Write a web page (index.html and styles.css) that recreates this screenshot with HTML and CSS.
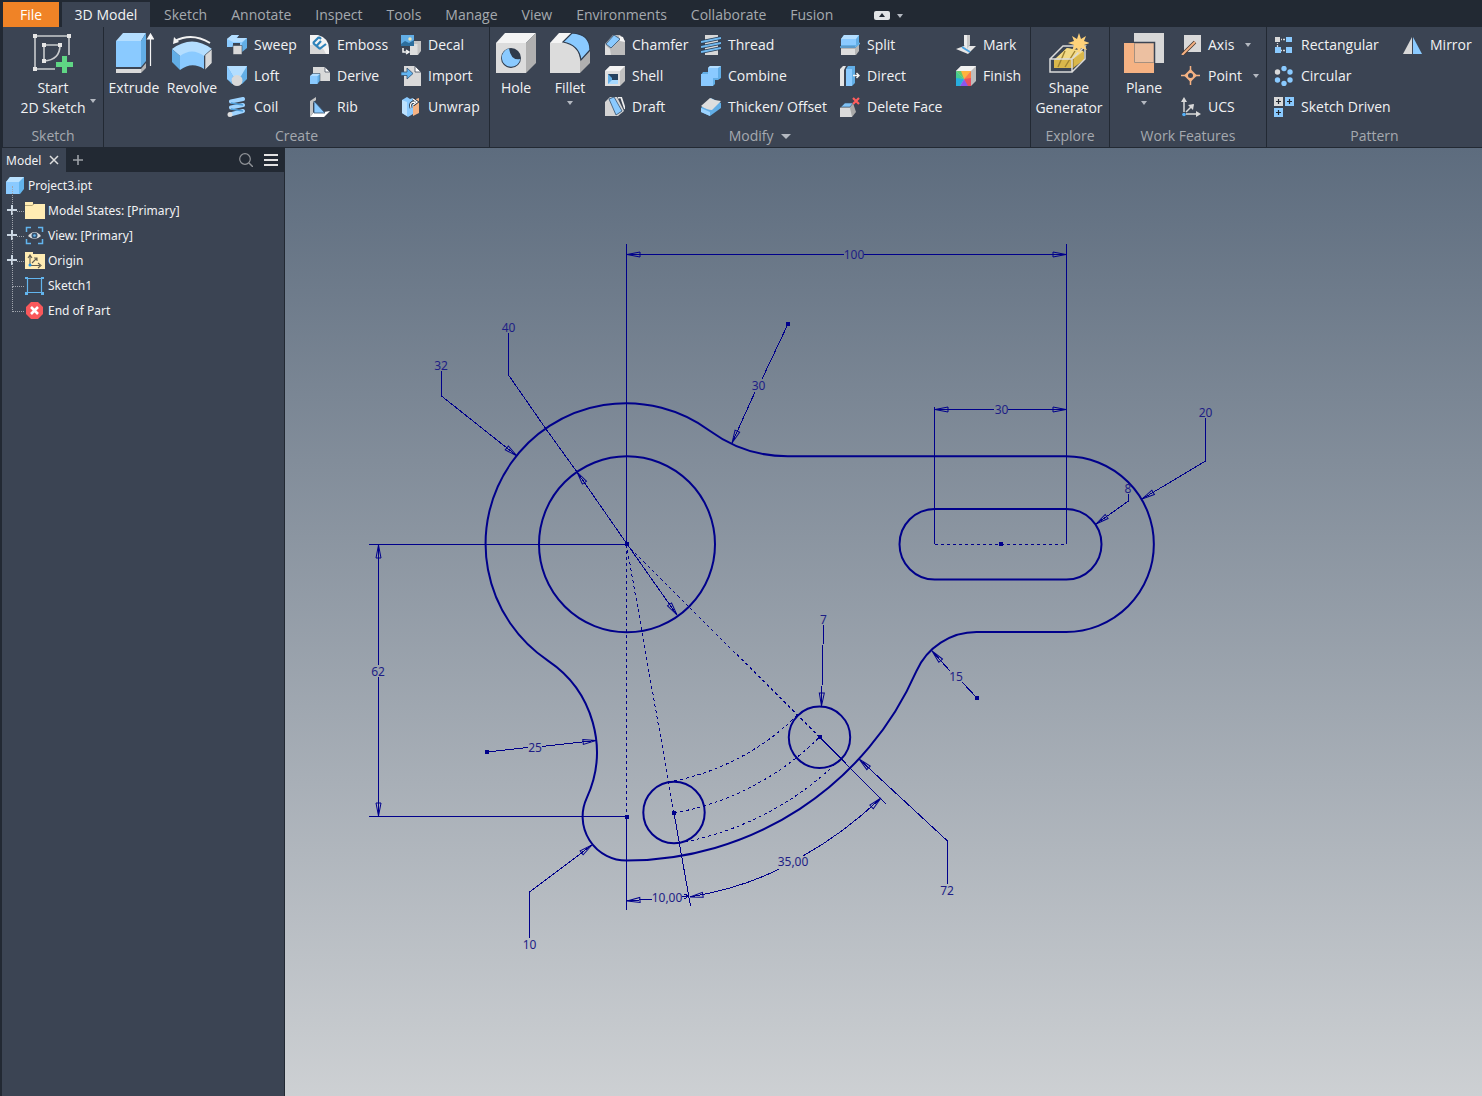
FILE: index.html
```html
<!DOCTYPE html>
<html lang="en">
<head>
<meta charset="utf-8">
<title>Project3.ipt</title>
<link rel="stylesheet" href="styles.css">
</head>
<body>
<svg class="sprite" aria-hidden="true">
  <symbol id="start-sketch" viewBox="0 0 40 40"><path d="M2 3H36V22M2 3V36H22M11 12H27M11 12V28M27 12Q27 27 11 28" fill="none" stroke="#c9cbce" stroke-width="1.6"/><path d="M0 1h4v4h-4zM34 1h4v4h-4zM0 34h4v4h-4zM9 10h4v4h-4zM25 10h4v4h-4zM9 26h4v4h-4z" fill="#e6e6e6"/><path d="M29 23h5v6h6v5h-6v6h-5v-6h-6v-5h6z" fill="#5fd684"/></symbol>
  <symbol id="extrude" viewBox="0 0 40 40"><path d="M2 8H27V34H2z" fill="#8acaff"/><path d="M2 8L9 0H32L27 8z" fill="#b4deff"/><path d="M27 8L32 0V28L27 34z" fill="#62aee6"/><path d="M2 36H27V40H2z" fill="#dadada"/><path d="M27 36L32 30V35L27 40z" fill="#b4b4b4"/><path d="M36.500 33V4M33.500 6L36.500 1L39.500 6z" fill="#fff" stroke="#f4f4f4" stroke-width="1.2"/></symbol>
  <symbol id="revolve" viewBox="0 0 40 40"><path d="M8 22Q20 13 32 22V36Q20 28 8 37z" fill="#8acaff"/><path d="M0 16Q20 1 40 16L32 23Q20 14 8 23z" fill="#b4deff"/><path d="M0 16L8 23V37L0 29z" fill="#62aee6"/><path d="M40 16L33 22V37L40 30z" fill="#d8d8d8" stroke="#3b4453" stroke-width=".6"/><path d="M3 8Q20-1 38 10" fill="none" stroke="#f2f2f2" stroke-width="2"/><path d="M1 11L2 4L7 9z" fill="#f2f2f2"/></symbol>
  <symbol id="hole" viewBox="0 0 40 40"><path d="M0 10H30V40H0z" fill="#dcdcdc"/><path d="M0 10L9 0H40L30 10z" fill="#f4f4f4"/><path d="M30 10L40 0V30L30 40z" fill="#b0b0b0"/><circle cx="15" cy="25" r="10" fill="#2e3a4b"/><path d="M13 15.500A9.300 9.300 0 1 0 24.300 26Q15 28 13 15.500z" fill="#8acaff"/></symbol>
  <symbol id="fillet" viewBox="0 0 40 40"><path d="M0 10L9 0H22V14z" fill="#f4f4f4"/><path d="M0 10H13Q29 11 30 26V40H0z" fill="#dcdcdc"/><path d="M30 27L40 17V30L30 40z" fill="#b0b0b0"/><path d="M13 9L22 0Q40 1 40 17L31 27Q29 12 13 9z" fill="#8acaff" stroke="#2e3a4b" stroke-width="1.2"/></symbol>
  <symbol id="shape-gen" viewBox="0 0 40 40"><path d="M5 27L18 15L35 19V27L24 35H5z" fill="#d9b74b"/><path d="M5 27L18 15L35 18L24 26z" fill="#f2d984"/><path d="M9 34L16 18M16 34L26 18M24 35V26" stroke="#9e8231" stroke-width="1.4"/><path d="M1 26H23V39H1zM1 26L14 13H36L23 26M36 13V26L23 39" fill="none" stroke="#dadada" stroke-width="1.5"/><path d="M30 0L32 6L37 3L35 8L41 10L35 12L38 17L32 15L30 21L28 15L23 18L25 12L19 10L25 8L23 3L28 6z" fill="#ffd27a"/></symbol>
  <symbol id="plane" viewBox="0 0 40 40"><path d="M10 0H40V30H10z" fill="#d8d8d8"/><path d="M0 10H30V40H0z" fill="#f5b283"/><path d="M10 10H30V30H10z" fill="#ecc0a1"/><path d="M10 9.500H30.500V30" fill="none" stroke="#3b4453" stroke-width="1.5"/><path d="M10.500 10V29.500H30" fill="none" stroke="#a6907f"/></symbol>

  <symbol id="sweep" viewBox="0 0 20 20"><path d="M0 4L5 0H12L10 3H20V13H13V8H6V12H0z" fill="#8acaff"/><path d="M0 4L5 0H12L9 3H20L15 7H6z" fill="#b4deff"/><path d="M15 8L20 3V13L15 17z" fill="#62aee6"/><path d="M6 10.500H15V19.500H6z" fill="#d9d9d9" stroke="#3b4453" stroke-width=".6"/></symbol>
  <symbol id="loft" viewBox="0 0 20 20"><path d="M0 0H20V13L15 18H5L0 13z" fill="#62aee6"/><path d="M0 0H20L14 10H6z" fill="#b4deff"/><path d="M0 0L6 10L4 16L0 13z" fill="#8acaff"/><circle cx="10" cy="14.500" r="5.500" fill="#d9d9d9"/></symbol>
  <symbol id="coil" viewBox="0 0 20 20"><path d="M4 4.500L16 2M4 10.500L16 8M5 17L16 14" stroke="#9dd3ff" stroke-width="4" stroke-linecap="round"/><path d="M4 6L16 8M4 12L16 14" stroke="#4d9cd8" stroke-width="1.500"/><circle cx="3" cy="17.500" r="2.500" fill="#dedede"/></symbol>
  <symbol id="emboss" viewBox="0 0 20 20"><path d="M0 0H8Q19 3 19 14V19H0z" fill="#f4f4f4"/><path d="M0 10Q12 8 16 19H0z" fill="#d8d8d8"/><path d="M3 8L9 2M3 8L10 14M6.500 11L11 6M9.500 14L16 9M9 2L11 4" fill="none" stroke="#2e83ba" stroke-width="2.200"/></symbol>
  <symbol id="derive" viewBox="0 0 20 20"><path d="M3 1H15L20 6V15H3z" fill="#d9d9d9"/><path d="M15 1V6H20z" fill="#fff" stroke="#3b4453" stroke-width=".7"/><path d="M0 10L2.500 7.500H10V15L7.500 18H0z" fill="#62aee6" stroke="#3b4453" stroke-width=".5"/><path d="M0 10H7.500V18H0z" fill="#8acaff"/><path d="M0 10L2.500 8H10L7.500 10z" fill="#b4deff"/></symbol>
  <symbol id="rib" viewBox="0 0 20 20"><path d="M0 4L6 0V3L3 6V16L0 20z" fill="#c4c4c4"/><path d="M0 20L4 15H14L20 14L14 20z" fill="#fff"/><path d="M4 4V16H15z" fill="#8acaff" stroke="#35506d" stroke-width=".8"/></symbol>
  <symbol id="decal" viewBox="0 0 20 20"><path d="M9 9L12 6H20V16L17 20H9z" fill="#c4c4c4"/><path d="M9 9H16.500V20H9z" fill="#dedede"/><path d="M0 0H13V11H0z" fill="#62aee6"/><path d="M0 9L4 6L8 8L13 5V11H0z" fill="#2d6e9d"/><circle cx="9" cy="4" r="1.700" fill="#eee7bb"/><path d="M2 13V17H7M5 15L8 17L5 19" fill="none" stroke="#f4f4f4" stroke-width="1.500"/></symbol>
  <symbol id="import" viewBox="0 0 20 20"><path d="M3 0H14L20 6V20H3z" fill="#d9d9d9"/><path d="M14 0V6H20z" fill="#fff" stroke="#3b4453" stroke-width=".8"/><path d="M0 6H6V2L12 7.500L6 13V9.500H0z" fill="#62b4f1" stroke="#35506d" stroke-width=".8"/></symbol>
  <symbol id="unwrap" viewBox="0 0 20 20"><path d="M1 3L6 0L9 2L12 1V17L7 20L1 16z" fill="#8acaff"/><path d="M1 3L6 5V19L1 16z" fill="#bde2ff"/><path d="M12 3L18 1V16L12 19z" fill="#f5b283"/><path d="M10 11Q8 5 14 5M12 2L16 5L12 8" fill="none" stroke="#27313f" stroke-width="3"/><path d="M10 11Q8 5 14 5M12 2L16 5L12 8" fill="none" stroke="#fff" stroke-width="1.300"/></symbol>
  <symbol id="chamfer" viewBox="0 0 20 20"><path d="M8 0H15L20 6V20H0V9z" fill="#bcbcbc"/><path d="M14 1L18 2L20 7L15 6z" fill="#f6f6f6"/><path d="M0 10L5 14L6 20H0z" fill="#dedede"/><path d="M1 9L9 0L15 4L6 13z" fill="#8acaff" stroke="#35506d" stroke-width=".8"/></symbol>
  <symbol id="shell" viewBox="0 0 20 20"><path d="M0 5L5 0H20V15L15 20H0z" fill="#c0c0c0"/><path d="M0 5L5 0H20L15 5z" fill="#f4f4f4"/><path d="M0 5H15V20H0z" fill="#dfdfdf"/><path d="M3 8H13V18H3z" fill="#264260"/><path d="M3 8L7 12V14H13V18H3z" fill="#62aee6"/><path d="M7 14H13V18H3z" fill="#a8d9ff"/></symbol>
  <symbol id="draft" viewBox="0 0 20 20"><path d="M0 5L5 0H12L19 14L13 19H0z" fill="#d4d4d4"/><path d="M4 2L9 0L17 14L11 18z" fill="#8acaff" stroke="#35506d" stroke-width=".8"/><path d="M13 1L16 0L20 12" fill="none" stroke="#eee" stroke-width="1.800"/></symbol>
  <symbol id="thread" viewBox="0 0 20 20"><path d="M4 0H17V20H4z" fill="#d8d8d8"/><path d="M0 7L20 3M0 12L20 8M0 17L20 13" stroke="#273c54" stroke-width="3.500"/><path d="M0 7L20 3M0 12L20 8M0 17L20 13" stroke="#71b9ef" stroke-width="2"/></symbol>
  <symbol id="combine" viewBox="0 0 20 20"><path d="M0 9L2 6H7V2L9 0H20V12L17 14H14V18L12 20H0z" fill="#62aee6"/><path d="M0 8H7V2H17V12H12V20H0z" fill="#8acaff"/><path d="M7 2L9 0H20L17 2z" fill="#b4deff"/></symbol>
  <symbol id="thicken" viewBox="0 0 20 20"><path d="M0 11L10 1L20 6V11L9 19L0 15z" fill="#62aee6"/><path d="M0 11L9 15V19L0 15z" fill="#9cd3ff"/><path d="M0 9L9 1Q14 4 20 4L11 13Q6 13 0 9z" fill="#dedede"/></symbol>
  <symbol id="split" viewBox="0 0 20 20"><path d="M1 13H15L19 9V16L16 20H1z" fill="#b7b7b7"/><path d="M1 14H15V20H1z" fill="#dedede"/><path d="M1 4L4 0H19V8L16 11H1z" fill="#62aee6"/><path d="M1 4H16V10H1z" fill="#8acaff"/><path d="M1 4L4 0H19L16 4z" fill="#b4deff"/><path d="M0 12H15L20 8" fill="none" stroke="#69b7ef" stroke-width="1.500"/></symbol>
  <symbol id="direct" viewBox="0 0 20 20"><path d="M0 3L3 0H6L4 4V20H0z" fill="#e4e4e4"/><path d="M6 3L8 0H15V17L12 20H6z" fill="#62aee6"/><path d="M6 3H12V20H6z" fill="#8acaff"/><path d="M13 9.500H19M16.500 7L19 9.500L16.500 12" fill="none" stroke="#f4f4f4" stroke-width="1.500"/></symbol>
  <symbol id="delete-face" viewBox="0 0 20 20"><path d="M0 11L5 6H13L16 15L12 20H0z" fill="#a9a9a9"/><path d="M0 11H10L12 20H0z" fill="#dadada"/><path d="M1 10L5 6H13L10 10z" fill="#7fc1f4" stroke="#35506d" stroke-width=".6"/><path d="M13 1L19 7M19 1L13 7" stroke="#ff5d5d" stroke-width="2.200"/></symbol>
  <symbol id="mark" viewBox="0 0 20 20"><path d="M0 14L8 11H20L12 19z" fill="#e6e6e6"/><path d="M6 12L14 17" stroke="#4ba2e1" stroke-width="2"/><path d="M8 0H14V10L11 14L8 10z" fill="#c7c7c7"/><path d="M8 0H11V14L8 10z" fill="#ececec"/></symbol>
  <symbol id="finish" viewBox="0 0 20 20"><path d="M0 5L5 0H20V15L15 20H0z" fill="#bdbdbd"/><path d="M0 5L5 0H20L15 5z" fill="#f1f1f1"/><path d="M0 5H8V13z" fill="#63c86b"/><path d="M5 5H15L8 13z" fill="#ffb33c"/><path d="M15 5V15L8 13z" fill="#ff7d45"/><path d="M15 12V20H11L8 13z" fill="#e95160"/><path d="M4 20H12L8 13z" fill="#8e55ee"/><path d="M0 11L8 13L4 20H0z" fill="#27adde"/><path d="M0 5L8 13L0 12z" fill="#45cb8d"/></symbol>
  <symbol id="axis" viewBox="0 0 20 20"><path d="M3 0H20V17H3z" fill="#d9d9d9"/><path d="M2 19L14 7" stroke="#47382f" stroke-width="3.500"/><path d="M1 20L14 7" stroke="#f5b283" stroke-width="2"/></symbol>
  <symbol id="point" viewBox="0 0 20 20"><path d="M9.500 0V19M0 9.500H19" stroke="#f5b283" stroke-width="1.500"/><path d="M9.500 3L16 9.500L9.500 16L3 9.500z" fill="#f5b283"/><circle cx="9.500" cy="9.500" r="2.500" fill="#3b4453"/></symbol>
  <symbol id="ucs" viewBox="0 0 20 20"><path d="M3 15V3M5 17H17M5 15L12 8" stroke="#d9d9d9" stroke-width="1.500"/><path d="M0 5L3 0L6 5zM15 14L20 17L15 20zM7 8L13 7L12 13z" fill="#d9d9d9"/><circle cx="3" cy="17.500" r="1.800" fill="#54b1fa"/></symbol>
  <symbol id="rectangular" viewBox="0 0 20 20"><path d="M7 4.500H12M3.500 8V12M7 15.500H12" stroke="#d9d9d9" stroke-width="1.300" stroke-dasharray="1 1 2 1"/><path d="M1 2h5v5h-5z" fill="#d9d9d9"/><path d="M12 2h6v5h-6zM1 12h6v6h-6zM12 12h6v6h-6z" fill="#8acaff"/></symbol>
  <symbol id="circular" viewBox="0 0 20 20"><g fill="#8acaff"><circle cx="10" cy="2.500" r="2.700"/><circle cx="16" cy="6" r="2.700"/><circle cx="16" cy="14" r="2.700"/><circle cx="10" cy="17.500" r="2.700"/><circle cx="3.500" cy="14" r="2.700"/></g><circle cx="3.500" cy="6" r="2.700" fill="#d9d9d9"/></symbol>
  <symbol id="sketch-driven" viewBox="0 0 20 20"><path d="M0 0h9v9h-9z" fill="#d9d9d9"/><path d="M11 0h9v9h-9zM0 11h9v9h-9z" fill="#8acaff"/><path d="M4.500 2V7M2 4.500H7M15.500 2V7M13 4.500H18M4.500 13V18M2 15.500H7" stroke="#222933" stroke-width="1.200"/></symbol>
  <symbol id="mirror" viewBox="0 0 20 20"><path d="M9 2V19H0z" fill="#d9d9d9"/><path d="M10 2V19H19z" fill="#8acaff"/></symbol>

  <symbol id="part" viewBox="0 0 20 20"><path d="M1 6L5 1H19V13L15 18H1z" fill="#62b5ee"/><path d="M1 6H14V18H1z" fill="#8acaff"/><path d="M1 6L5 1H19L14 6z" fill="#b9e1ff"/></symbol>
  <symbol id="folder" viewBox="0 0 20 20"><path d="M0 1H8V3H20V18H0z" fill="#ffecb3"/><path d="M0 4.500H7L9 3" fill="none" stroke="#b9a878"/></symbol>
  <symbol id="view" viewBox="0 0 20 20"><path d="M1.500 6V1.500H6M13 1.500H17.500V6M17.500 13V17.500H13M6 17.500H1.500V13" fill="none" stroke="#62b5ee" stroke-width="1.500"/><path d="M3 10Q9.500 2 16 10Q9.500 16 3 10z" fill="#dedede"/><circle cx="9.500" cy="9.500" r="3" fill="#35506d"/><circle cx="9.500" cy="9.500" r="1.300" fill="#62b5ee"/></symbol>
  <symbol id="origin" viewBox="0 0 20 20"><path d="M0 1H8V3H20V18H0z" fill="#ffecb3"/><path d="M5 14V5M3 7L5 4L7 7M6 14.500H15M13 12L16 14.500L13 17M7 12L12 7M9 7H12V10" fill="none" stroke="#625e50" stroke-width="1.100"/><circle cx="5" cy="14" r="1.500" fill="#1c90e8"/></symbol>
  <symbol id="sketch" viewBox="0 0 20 20"><path d="M2.500 2.500H16.500V16.500H2.500z" fill="none" stroke="#62b5ee" stroke-width="1.200"/><path d="M0 1h3v2h-3zM16 1h3v2h-3zM0 16h3v3h-3zM16 16h3v3h-3z" fill="#62b5ee"/></symbol>
  <symbol id="end" viewBox="0 0 20 20"><path d="M6 1H13L18 6V13L13 18H6L1 13V6z" fill="#f9585b"/><path d="M6 6L13 13M13 6L6 13" stroke="#fff" stroke-width="2.600"/></symbol>
</svg>

<nav class="tabs">
  <button class="tab tab-file">File</button>
  <button class="tab tab-active">3D Model</button>
  <button class="tab">Sketch</button>
  <button class="tab">Annotate</button>
  <button class="tab">Inspect</button>
  <button class="tab">Tools</button>
  <button class="tab">Manage</button>
  <button class="tab">View</button>
  <button class="tab">Environments</button>
  <button class="tab">Collaborate</button>
  <button class="tab">Fusion</button>
  <button class="ribbon-toggle" aria-label="Minimize ribbon"><svg width="30" height="10" viewBox="0 0 30 10"><rect width="16" height="9" rx="2" fill="#e2e4e7"/><path d="M5 6L8 2L11 6z" fill="#222933"/><path d="M23 3H29L26 7z" fill="#b4b9c1"/></svg></button>
</nav>

<div class="ribbon">
  <section class="panel panel-sketch">
    <div class="tools">
      <button class="big"><svg><use href="#start-sketch"/></svg><span>Start<br>2D Sketch</span><i class="caret caret-corner"></i></button>
    </div>
    <h2>Sketch</h2>
  </section>
  <section class="panel panel-create">
    <div class="tools">
      <button class="big"><svg><use href="#extrude"/></svg><span>Extrude</span></button>
      <button class="big"><svg><use href="#revolve"/></svg><span>Revolve</span></button>
      <div class="stack">
        <button class="small"><svg><use href="#sweep"/></svg>Sweep</button>
        <button class="small"><svg><use href="#loft"/></svg>Loft</button>
        <button class="small"><svg><use href="#coil"/></svg>Coil</button>
      </div>
      <div class="stack">
        <button class="small"><svg><use href="#emboss"/></svg>Emboss</button>
        <button class="small"><svg><use href="#derive"/></svg>Derive</button>
        <button class="small"><svg><use href="#rib"/></svg>Rib</button>
      </div>
      <div class="stack">
        <button class="small"><svg><use href="#decal"/></svg>Decal</button>
        <button class="small"><svg><use href="#import"/></svg>Import</button>
        <button class="small"><svg><use href="#unwrap"/></svg>Unwrap</button>
      </div>
    </div>
    <h2>Create</h2>
  </section>
  <section class="panel panel-modify">
    <div class="tools">
      <button class="big"><svg><use href="#hole"/></svg><span>Hole</span></button>
      <button class="big"><svg><use href="#fillet"/></svg><span>Fillet</span><i class="caret"></i></button>
      <div class="stack">
        <button class="small"><svg><use href="#chamfer"/></svg>Chamfer</button>
        <button class="small"><svg><use href="#shell"/></svg>Shell</button>
        <button class="small"><svg><use href="#draft"/></svg>Draft</button>
      </div>
      <div class="stack">
        <button class="small"><svg><use href="#thread"/></svg>Thread</button>
        <button class="small"><svg><use href="#combine"/></svg>Combine</button>
        <button class="small"><svg><use href="#thicken"/></svg>Thicken/ Offset</button>
      </div>
      <div class="stack">
        <button class="small"><svg><use href="#split"/></svg>Split</button>
        <button class="small"><svg><use href="#direct"/></svg>Direct</button>
        <button class="small"><svg><use href="#delete-face"/></svg>Delete Face</button>
      </div>
      <div class="stack">
        <button class="small"><svg><use href="#mark"/></svg>Mark</button>
        <button class="small"><svg><use href="#finish"/></svg>Finish</button>
      </div>
    </div>
    <h2>Modify <i class="caret caret-wide"></i></h2>
  </section>
  <section class="panel panel-explore">
    <div class="tools">
      <button class="big"><svg><use href="#shape-gen"/></svg><span>Shape<br>Generator</span></button>
    </div>
    <h2>Explore</h2>
  </section>
  <section class="panel panel-work">
    <div class="tools">
      <button class="big"><svg><use href="#plane"/></svg><span>Plane</span><i class="caret"></i></button>
      <div class="stack">
        <button class="small"><svg><use href="#axis"/></svg>Axis<i class="caret"></i></button>
        <button class="small"><svg><use href="#point"/></svg>Point<i class="caret"></i></button>
        <button class="small"><svg><use href="#ucs"/></svg>UCS</button>
      </div>
    </div>
    <h2>Work Features</h2>
  </section>
  <section class="panel panel-pattern">
    <div class="tools">
      <div class="stack">
        <button class="small"><svg><use href="#rectangular"/></svg>Rectangular</button>
        <button class="small"><svg><use href="#circular"/></svg>Circular</button>
        <button class="small"><svg><use href="#sketch-driven"/></svg>Sketch Driven</button>
      </div>
      <div class="stack">
        <button class="small"><svg><use href="#mirror"/></svg>Mirror</button>
      </div>
    </div>
    <h2>Pattern</h2>
  </section>
</div>

<main class="workspace">
  <aside class="browser">
    <header class="browser-bar">
      <button class="browser-tab">Model <svg width="10" height="10" viewBox="0 0 10 10"><path d="M1 1L9 9M9 1L1 9" stroke="#dedede" stroke-width="1.500"/></svg></button>
      <button class="bar-button" aria-label="Add"><svg width="12" height="12" viewBox="0 0 12 12"><path d="M6 1V11M1 6H11" stroke="#9da1a7" stroke-width="1.600"/></svg></button>
      <button class="bar-button push" aria-label="Search"><svg width="14" height="14" viewBox="0 0 14 14"><circle cx="6" cy="6" r="5.300" fill="none" stroke="#909398" stroke-width="1.200"/><path d="M10 10L14 14" stroke="#909398" stroke-width="1.400"/></svg></button>
      <button class="bar-button" aria-label="Menu"><svg width="14" height="12" viewBox="0 0 14 12"><path d="M0 1H14M0 6H14M0 11H14" stroke="#e2e2e2" stroke-width="2"/></svg></button>
    </header>
    <ul class="tree">
      <li class="root"><svg><use href="#part"/></svg>Project3.ipt</li>
      <li class="branch"><svg><use href="#folder"/></svg>Model States: [Primary]</li>
      <li class="branch"><svg><use href="#view"/></svg>View: [Primary]</li>
      <li class="branch"><svg><use href="#origin"/></svg>Origin</li>
      <li><svg><use href="#sketch"/></svg>Sketch1</li>
      <li><svg><use href="#end"/></svg>End of Part</li>
    </ul>
  </aside>
  <div class="canvas">
    <svg class="drawing" viewBox="285 148 1197 948" role="img" aria-label="Sketch1">
      <defs>
        <marker id="arrow" markerUnits="userSpaceOnUse" markerWidth="16" markerHeight="8" refX="14" refY="4" orient="auto-start-reverse" viewBox="0 0 16 8"><path d="M14 4L1 1.500V6.500z" fill="none" stroke="#00008b"/></marker>
      </defs>
      <g class="profile">
        <path d="M1066 456.300H788A131.900 131.900 0 0 1 709.700 430.700A140.600 140.600 0 1 0 548.200 660.800A109.900 109.900 0 0 1 586.700 798.100A44 44 0 0 0 626.500 860.600A316.500 316.500 0 0 0 916.300 671.300A65.900 65.900 0 0 1 977 632H1066A87.850 87.850 0 0 0 1153.850 544.150A87.850 87.850 0 0 0 1066 456.300z"/>
        <circle cx="627" cy="544.300" r="88"/>
        <rect x="899.500" y="509" width="202" height="70.500" rx="35.200"/>
        <circle cx="674" cy="812.500" r="30.700"/>
        <circle cx="819.500" cy="737.300" r="30.700"/>
      </g>
      <g class="thin dashed">
        <path d="M934.500 544.500H1066M626.500 544.500V817M626.500 544.500L674 813M626.500 544.500L819.500 737"/>
        <path d="M668.500 782A241.700 241.700 0 0 0 797.400 715M674 813A272.500 272.500 0 0 0 819.500 737M679 843A303.300 303.300 0 0 0 841 758.500"/>
      </g>
      <g class="thin">
        <path d="M626.500 244V544M1066.500 244V544M934.500 407V544M369 544.500H627M369 816.500H627M626.500 817V910M674 813L690.500 906M819.500 737L886 804"/>
        <path d="M844 254.500H627" marker-end="url(#arrow)"/><path d="M864 254.500H1066" marker-end="url(#arrow)"/>
        <path d="M994 409.500H935" marker-end="url(#arrow)"/><path d="M1008 409.500H1066" marker-end="url(#arrow)"/>
        <path d="M378.500 665V545" marker-end="url(#arrow)"/><path d="M378.500 677V816" marker-end="url(#arrow)"/>
        <path d="M508.500 333V375L546 429L577 472"/>
        <path d="M627 544L577 472" marker-end="url(#arrow)"/><path d="M627 544L677 615" marker-end="url(#arrow)"/>
        <path d="M441.500 371V396L517 456" marker-end="url(#arrow)"/>
        <path d="M788 324L762 379"/><path d="M755 392L732 443" marker-end="url(#arrow)"/>
        <path d="M1205.500 418V461L1142 499" marker-end="url(#arrow)"/>
        <path d="M1128.500 494V501L1096 524" marker-end="url(#arrow)"/>
        <path d="M823.500 625L821.500 706" marker-end="url(#arrow)"/>
        <path d="M977 698L962 682"/><path d="M950 671L932 651" marker-end="url(#arrow)"/>
        <path d="M487 752L528 747.500"/><path d="M542 746.500L596 740.500" marker-end="url(#arrow)"/>
        <path d="M529.500 938V892L592 845" marker-end="url(#arrow)"/>
        <path d="M947.500 884V841L859 759" marker-end="url(#arrow)"/>
        <path d="M652 899L627 901" marker-end="url(#arrow)"/>
        <path d="M682 897L689 896M684 894L689 896L684 899"/>
        <path d="M779 869Q742 888 690 897" marker-end="url(#arrow)"/>
        <path d="M803 856Q844 833 881 798" marker-end="url(#arrow)"/>
      </g>
      <path class="points" d="M786 322h4v4h-4zM999 542h4v4h-4zM625 542h4v4h-4zM625 815h4v4h-4zM672 811h4v4h-4zM818 735h4v4h-4zM975 696h4v4h-4zM485 750h4v4h-4z"/>
      <g class="dims">
        <text x="854" y="259">100</text>
        <text x="508.500" y="332">40</text>
        <text x="441" y="370">32</text>
        <text x="758.500" y="390">30</text>
        <text x="1001.500" y="414">30</text>
        <text x="1205.500" y="417">20</text>
        <text x="1128" y="493">8</text>
        <text x="823.500" y="624">7</text>
        <text x="956" y="681">15</text>
        <text x="378" y="676">62</text>
        <text x="535" y="752">25</text>
        <text x="793" y="866">35,00</text>
        <text x="667" y="902">10,00</text>
        <text x="947" y="895">72</text>
        <text x="529.500" y="949">10</text>
      </g>
    </svg>
  </div>
</main>
</body>
</html>
```
FILE: styles.css
```css
:root {
  --dark: #222933;
  --panel: #3b4453;
  --text: #f1f2f3;
  --muted: #a5a9af;
  --ink: #00008b;
}

* { box-sizing: border-box; }

body {
  margin: 0;
  min-height: 100vh;
  display: flex;
  flex-direction: column;
  background: var(--dark);
  color: var(--text);
  font: 14px/20px "Open Sans", "Noto Sans", sans-serif;
}

button {
  margin: 0;
  padding: 0;
  border: 0;
  background: none;
  color: inherit;
  font: inherit;
  white-space: nowrap;
}

.sprite { position: absolute; width: 0; height: 0; }

/* Ribbon tabs */
.tabs {
  display: flex;
  height: 27px;
  padding: 2px 0 0 3px;
}
.tab {
  padding: 0 12px;
  color: var(--muted);
}
.tab-file {
  width: 56px;
  margin-right: 3px;
  background: #f08326;
  color: #fff;
}
.tab-active {
  width: 88px;
  margin-right: 2px;
  background: var(--panel);
  color: var(--text);
}
.ribbon-toggle { padding: 3px 0 0 29px; }
.ribbon-toggle svg { display: block; }

/* Ribbon panels */
.ribbon {
  display: flex;
  height: 121px;
  margin-left: 3px;
  background: var(--panel);
  border-bottom: 1px solid var(--dark);
}
.panel {
  flex: none;
  display: flex;
  flex-direction: column;
  border-right: 1px solid var(--dark);
}
.tools {
  flex: 1;
  display: grid;
}
.panel h2 {
  margin: 0;
  font-size: 14px;
  line-height: 22px;
  font-weight: 400;
  text-align: center;
  color: var(--muted);
}
.panel-sketch { width: 101px; }
.panel-create { width: 386px; }
.panel-create .tools { grid-template-columns: 60px 63px 83px 91px 1fr; }
.panel-create .big + .big { padding-right: 7px; }
.panel-modify { width: 541px; }
.panel-modify .tools { grid-template-columns: 52px 63px 96px 139px 116px 1fr; }
.panel-modify .big + .big { padding-right: 7px; }
.panel-explore { width: 79px; }
.panel-explore .big { padding-right: 2px; }
.panel-work { width: 157px; }
.panel-work .tools { grid-template-columns: 71px 1fr; }
.panel-work .big { padding-right: 3px; }
.panel-pattern { flex: 1; border-right: 0; }
.panel-pattern .tools {
  padding-left: 7px;
  grid-template-columns: 129px 1fr;
}

.big {
  position: relative;
  display: flex;
  flex-direction: column;
  align-items: center;
  padding-top: 6px;
}
.big svg {
  width: 40px;
  height: 40px;
  margin-bottom: 5px;
}
.stack {
  display: grid;
  grid-template-rows: repeat(3, 31px);
  align-content: start;
  padding-top: 2px;
}
.small {
  display: flex;
  align-items: center;
  gap: 7px;
}
.small svg { flex: none; width: 20px; height: 20px; }

.caret {
  width: 0;
  height: 0;
  border: 3px solid transparent;
  border-top: 4px solid #b4b9c1;
  border-bottom: 0;
}
.big .caret { margin-top: 3px; }
.small .caret { margin-left: 4px; }
.big .caret-corner {
  position: absolute;
  right: 7px;
  bottom: 22px;
}
.caret-wide {
  display: inline-block;
  margin-left: 4px;
  border-width: 5px 5px 0;
  vertical-align: 2px;
}

/* Workspace */
.workspace { flex: 1; display: flex; }
.browser {
  flex: none;
  width: 285px;
  padding: 0 1px 0 2px;
  display: flex;
  flex-direction: column;
  font: 12px/25px "Noto Sans", sans-serif;
}
.browser-bar {
  display: flex;
  align-items: center;
  height: 24px;
  padding-right: 6px;
}
.browser-tab {
  display: flex;
  align-items: center;
  gap: 8px;
  height: 24px;
  padding: 0 7px 0 4px;
  background: var(--panel);
}
.bar-button { display: flex; margin-left: 6px; }
.push { margin: 0 5px 0 auto; }
.tree {
  flex: 1;
  margin: 0;
  padding: 1px 0 0 3px;
  list-style: none;
  background: var(--panel);
}
.tree li {
  position: relative;
  display: flex;
  align-items: center;
  gap: 3px;
  height: 25px;
  padding-left: 20px;
}
.tree .root { padding-left: 0; }
.tree svg { flex: none; width: 20px; height: 20px; }
.tree li:not(.root)::before {
  content: "";
  position: absolute;
  left: 7px;
  top: -12px;
  width: 11px;
  height: 25px;
  border-left: 1px dotted #a0a5ad;
  border-bottom: 1px dotted #a0a5ad;
}
.tree .branch::after {
  content: "";
  position: absolute;
  left: 2px;
  top: 7px;
  width: 10px;
  height: 10px;
  background:
    linear-gradient(#cbd7e3, #cbd7e3) center / 10px 2px no-repeat,
    linear-gradient(#cbd7e3, #cbd7e3) center / 2px 10px no-repeat,
    var(--panel);
}

.canvas {
  flex: 1;
  min-width: 0;
  display: flex;
  background: linear-gradient(#5d6c7e, #cdd0d3);
}
.drawing { width: 100%; }
.profile { fill: none; stroke: var(--ink); stroke-width: 2; }
.thin { fill: none; stroke: var(--ink); shape-rendering: crispEdges; }
.dashed { stroke-dasharray: 3 3; }
.points { fill: var(--ink); }
.dims {
  fill: #1e1e85;
  font: 12px "Noto Sans", sans-serif;
  text-anchor: middle;
}
```
